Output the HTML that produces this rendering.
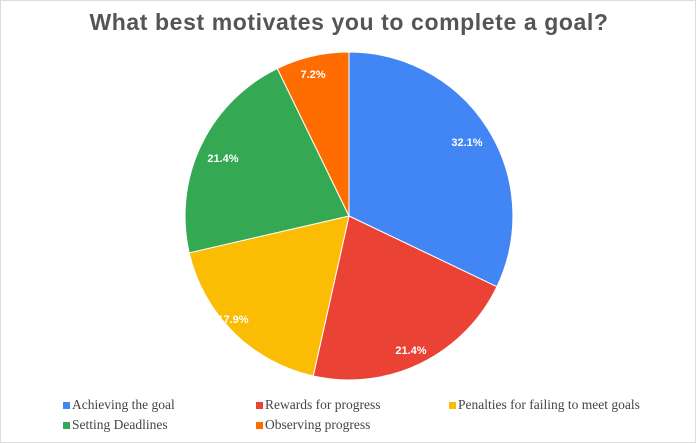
<!DOCTYPE html>
<html><head><style>
html,body{margin:0;padding:0;background:#fff;}
body{width:696px;height:443px;position:relative;overflow:hidden;border:1px solid #ddd;box-sizing:border-box;}
.t{position:absolute;left:0;width:696px;top:8px;text-align:center;font:bold 23px "Liberation Sans",sans-serif;color:#555;letter-spacing:0.6px}
.lg{position:absolute;font:13.5px "Liberation Serif",serif;color:#444;}
.lg i{display:inline-block;width:7px;height:7px;margin-right:2px;vertical-align:0px}
</style></head><body>
<div class="t">What best motivates you to complete a goal?</div>
<svg width="696" height="443" style="position:absolute;left:0;top:0">
<g stroke="#fff" stroke-width="1">
<path d="M348,215 L348,51 A164,164 0 0 1 495.9,285.7 Z" fill="#4285f4"/>
<path d="M348,215 L495.9,285.7 A164,164 0 0 1 312.2,375 Z" fill="#ea4335"/>
<path d="M348,215 L312.2,375 A164,164 0 0 1 188.2,251.8 Z" fill="#fbbc04"/>
<path d="M348,215 L188.2,251.8 A164,164 0 0 1 276.3,67.5 Z" fill="#34a853"/>
<path d="M348,215 L276.3,67.5 A164,164 0 0 1 348,51 Z" fill="#ff6d01"/>
</g>
<g font-family="Liberation Sans,sans-serif" font-size="11" font-weight="bold" fill="#fff" text-anchor="middle">
<text x="466" y="145">32.1%</text>
<text x="410" y="353">21.4%</text>
<text x="232" y="322">17.9%</text>
<text x="222" y="161">21.4%</text>
<text x="312" y="77">7.2%</text>
</g>
</svg>
<div class="lg" style="left:62px;top:396px"><i style="background:#4285f4"></i>Achieving the goal</div>
<div class="lg" style="left:255px;top:396px"><i style="background:#ea4335"></i>Rewards for progress</div>
<div class="lg" style="left:448px;top:396px"><i style="background:#fbbc04"></i>Penalties for failing to meet goals</div>
<div class="lg" style="left:62px;top:416px"><i style="background:#34a853"></i>Setting Deadlines</div>
<div class="lg" style="left:255px;top:416px"><i style="background:#ff6d01"></i>Observing progress</div>
</body></html>
